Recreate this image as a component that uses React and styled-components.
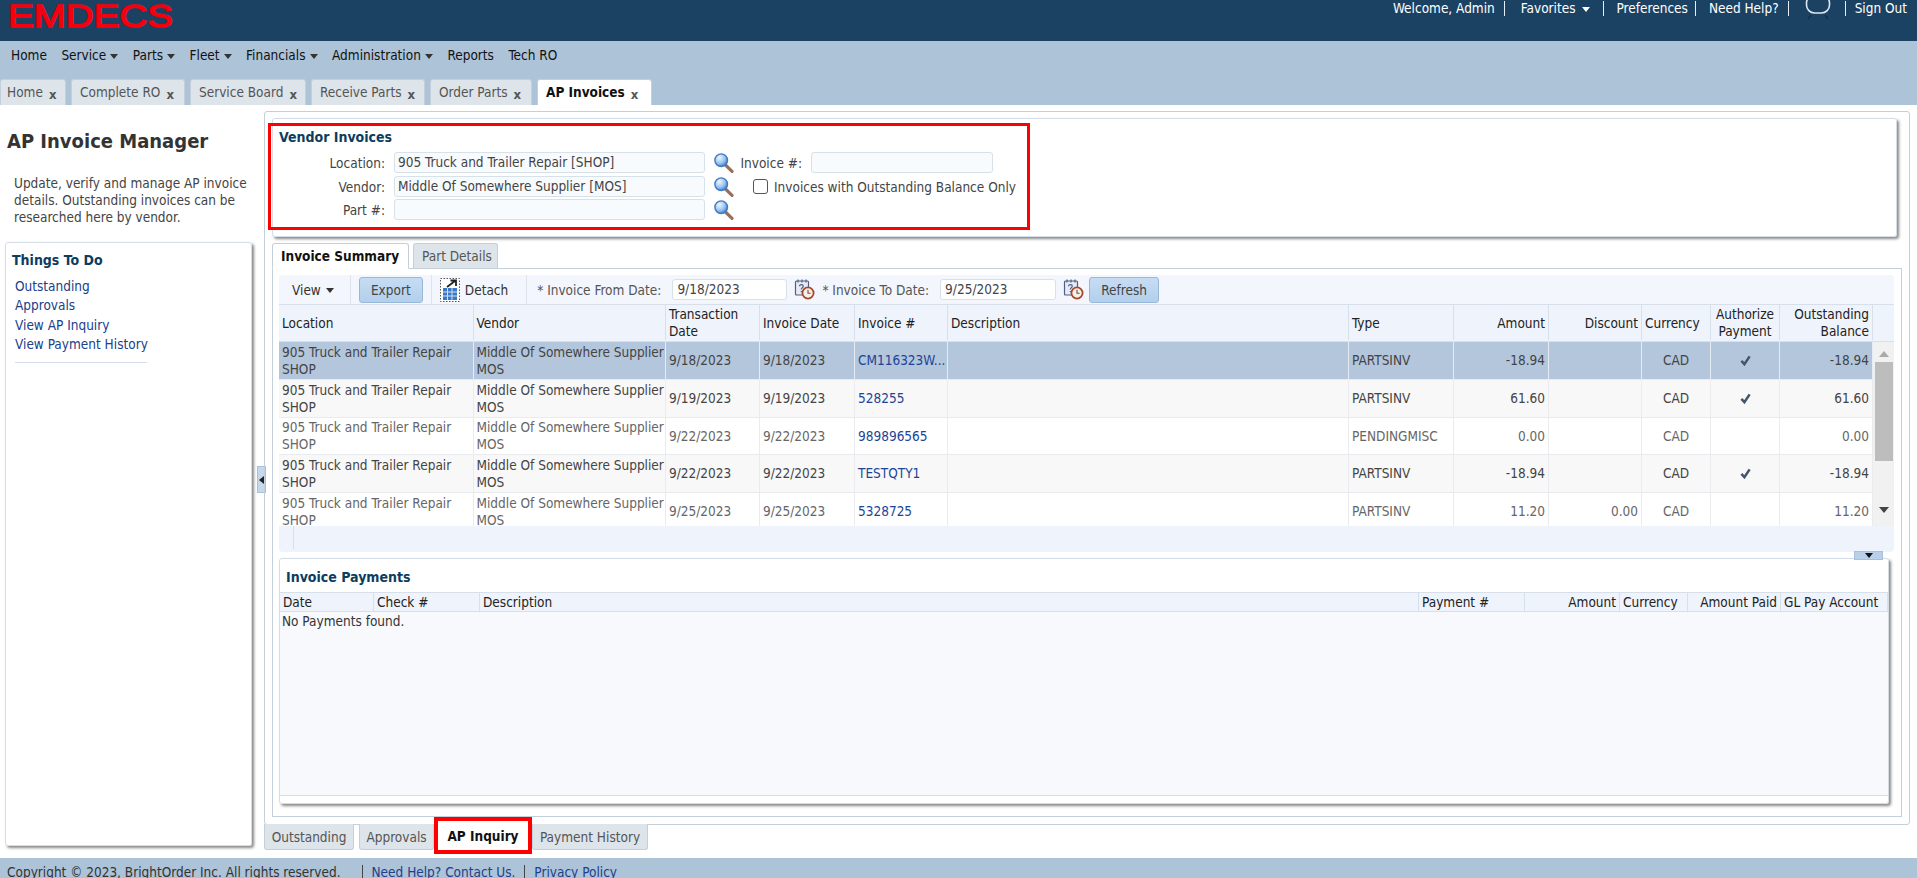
import styled, { createGlobalStyle } from "styled-components";

const GlobalStyle = createGlobalStyle`
  html, body {
    margin: 0;
    padding: 0;
    height: 100%;
    overflow: hidden;
    background: #fff;
  }
  body {
    font-family: "DejaVu Sans Condensed", "DejaVu Sans", sans-serif;
    font-stretch: condensed;
    font-size: 13.5px;
    color: #444;
  }
  * {
    box-sizing: border-box;
  }
`;

const Page = styled.div`
  width: 1917px;
  height: 878px;
  display: flex;
  flex-direction: column;
  overflow: hidden;
`;

const TopBar = styled.header`
  height: 41px;
  flex: none;
  background: #1c4263;
  display: flex;
  justify-content: space-between;
  padding: 0 10px 0 7px;
  color: #fff;
`;

const Logo = styled.svg`
  width: 170px;
  height: 30px;
  margin-top: 1px;
`;

const UserLinks = styled.div`
  display: flex;
  align-items: flex-start;
  height: 17px;
  line-height: 17px;
`;

const UserLink = styled.span`
  margin-left: ${(p) => p.$left || 0}px;
  display: inline-flex;
  align-items: center;
  gap: 6px;
`;

const Pipe = styled.span`
  margin-left: ${(p) => p.$left || 9}px;
  width: 1px;
  height: 15px;
  margin-top: 1px;
  background: #e8eef4;
`;

const ChatIcon = styled.svg`
  width: 26px;
  height: 20px;
  margin-left: 16px;
`;

const NavBlock = styled.div`
  height: 64px;
  flex: none;
  background: #adc3d8;
  display: flex;
  flex-direction: column;
  justify-content: space-between;
`;

const Menu = styled.nav`
  display: flex;
  align-items: center;
  height: 28px;
  padding-left: 11px;
  gap: 14.5px;
  color: #111;
`;

const MenuItem = styled.span`
  display: inline-flex;
  align-items: center;
  gap: 4px;
`;

const Caret = styled.i`
  display: inline-block;
  width: 0;
  height: 0;
  margin-top: 2px;
  border-left: 4.5px solid transparent;
  border-right: 4.5px solid transparent;
  border-top: 5px solid ${(p) => p.$color || "#333"};
`;

const PageTabs = styled.div`
  display: flex;
  gap: 5px;
  height: 26px;
  align-items: stretch;
`;

const PageTab = styled.div`
  display: flex;
  align-items: center;
  gap: 6px;
  width: ${(p) => p.$width}px;
  padding: 0 0 2px ${(p) => (p.$first ? 6 : 8)}px;
  background: ${(p) => (p.$active ? "#fff" : "#dde4ea")};
  color: ${(p) => (p.$active ? "#111" : "#555")};
  font-weight: ${(p) => (p.$active ? 700 : 400)};
  border: 1px solid #c3d0dc;
  border-bottom: none;
  border-radius: 3px 3px 0 0;
  white-space: nowrap;
`;

const CloseMark = styled.span`
  font-weight: 700;
  font-size: 13px;
  line-height: 1;
  margin-top: 6px;
  color: #555;
`;

const Body = styled.div`
  flex: 1;
  display: flex;
  min-height: 0;
  background: #fff;
`;

const Sidebar = styled.aside`
  width: 257px;
  flex: none;
  display: flex;
  flex-direction: column;
  padding: 0 5px 12px 5px;
`;

const PageTitle = styled.h1`
  margin: 23px 0 0 2px;
  font-size: 20px;
  line-height: 26px;
  font-weight: 700;
  color: #333;
`;

const Intro = styled.p`
  margin: 21px 0 0 9px;
  font-size: 13.5px;
  line-height: 17px;
  color: #444;
  white-space: nowrap;
`;

const TodoCard = styled.section`
  flex: 1;
  margin-top: 16px;
  width: 247px;
  border: 1px solid #d5dee8;
  border-radius: 3px;
  box-shadow: 2px 2px 3px #888;
  padding: 8px 0 0 6px;
`;

const TodoTitle = styled.h3`
  margin: 0;
  font-size: 14px;
  line-height: 18px;
  font-weight: 700;
  color: #0c3c5e;
`;

const TodoList = styled.div`
  display: flex;
  flex-direction: column;
  margin: 8px 0 0 3px;
  width: 132px;
  padding-bottom: 7px;
  border-bottom: 1px solid #d5dee8;
`;

const TodoLink = styled.a`
  color: #20408a;
  line-height: 19.4px;
  white-space: nowrap;
`;

const Splitter = styled.div`
  width: 7px;
  flex: none;
  padding-top: 361px;
`;

const SplitHandle = styled.div`
  width: 9px;
  height: 27px;
  background: #c4d8ee;
  border: 1px solid #a8c0da;
  display: flex;
  align-items: center;
  justify-content: center;
`;

const HandleArrow = styled.i`
  width: 0;
  height: 0;
  border-top: 4px solid transparent;
  border-bottom: 4px solid transparent;
  border-right: 5px solid #222;
`;

const Workspace = styled.main`
  width: 646px;
  flex: 1;
  display: flex;
  flex-direction: column;
  padding: 6px 7px 0 0;
  min-width: 0;
`;

const OuterPanel = styled.div`
  height: 714px;
  border: 1px solid #c3cfdb;
  border-radius: 3px;
  padding: 6px 7px 7px 7px;
`;

const VendorCard = styled.section`
  height: 119px;
  margin-right: 5px;
  padding-top: 4px;
  border: 1px solid #d5dee8;
  border-radius: 3px;
  box-shadow: 2px 2px 3px #888;
`;

const RedBox = styled.div`
  position: relative;
  width: 762px;
  height: 107px;
  margin-left: -5px;
  border: 3px solid #f00;
  padding: 0 0 0 8px;
`;

const SectionTitle = styled.h3`
  margin: 0;
  font-size: 14px;
  line-height: 22px;
  font-weight: 700;
  color: #0c3c5e;
`;

const FieldRow = styled.div`
  display: flex;
  align-items: center;
  height: 21px;
  margin-top: ${(p) => p.$top ?? 3}px;
  margin-left: -8px;
`;

const FieldLabel = styled.label`
  width: ${(p) => p.$width}px;
  flex: none;
  text-align: right;
  padding-right: ${(p) => p.$pad ?? 9}px;
  color: #444;
`;

const TextBox = styled.div`
  width: ${(p) => p.$width}px;
  height: 21px;
  flex: none;
  line-height: 19px;
  margin-left: ${(p) => p.$left || 0}px;
  padding-left: 3px;
  background: #f8fbfd;
  border: 1px solid #d7e1ea;
  border-radius: 3px;
  color: #444;
`;

const SearchIcon = styled.svg`
  width: 20px;
  height: 20px;
  margin-left: 9px;
  flex: none;
`;

const CheckBox = styled.i`
  width: 15px;
  height: 15px;
  flex: none;
  margin-left: 19px;
  background: #fff;
  border: 1px solid #555;
  border-radius: 3px;
`;

const CheckLabel = styled.span`
  margin-left: 6px;
  white-space: nowrap;
  color: #444;
`;

const InnerTabs = styled.div`
  display: flex;
  gap: 4px;
  height: 25px;
  margin-top: 6px;
`;

const InnerTab = styled.div`
  display: flex;
  align-items: center;
  width: ${(p) => p.$width}px;
  padding-left: 8px;
  background: ${(p) => (p.$active ? "#fff" : "#dde4ea")};
  color: ${(p) => (p.$active ? "#111" : "#555")};
  font-weight: ${(p) => (p.$active ? 700 : 400)};
  border: 1px solid #c3d0dc;
  border-bottom: ${(p) => (p.$active ? "1px solid #fff" : "none")};
  height: ${(p) => (p.$active ? 26 : 25)}px;
  border-radius: 3px 3px 0 0;
  position: relative;
  z-index: 1;
  white-space: nowrap;
`;

const TabBody = styled.div`
  height: 549px;
  border: 1px solid #c3cfdb;
  padding: 6px 7px 0 6px;
`;

const Toolbar = styled.div`
  display: flex;
  align-items: center;
  height: 29px;
  background: #f3f6fc;
  border-radius: 3px 3px 0 0;
`;

const ToolGroup = styled.div`
  display: flex;
  align-items: center;
  height: 100%;
  padding: 0 ${(p) => p.$right ?? 8}px 0 ${(p) => p.$left ?? 8}px;
  border-right: ${(p) => (p.$last ? "none" : "1px solid #dde4ee")};
`;

const ToolText = styled.span`
  display: inline-flex;
  align-items: center;
  gap: 5px;
  color: #333;
  white-space: nowrap;
`;

const BlueButton = styled.button`
  height: 26px;
  width: ${(p) => p.$width}px;
  padding: 0;
  margin-left: ${(p) => p.$left || 0}px;
  font: inherit;
  font-stretch: condensed;
  color: #444;
  background: linear-gradient(#c6dcf3, #b3cfec);
  border: 1px solid #98b8da;
  border-radius: 3px;
`;

const DateLabel = styled.span`
  margin-left: ${(p) => p.$left || 0}px;
  color: #555;
  white-space: nowrap;
`;

const DateBox = styled(TextBox)`
  margin-left: 11px;
  padding-left: 4px;
  background: #fff;
`;

const CalendarIcon = styled.svg`
  width: 21px;
  height: 22px;
  flex: none;
  margin-left: 7px;
  margin-top: -2px;
`;

const summaryColumns = "194.5px 192.5px 94px 95px 93px 401px 105px 95px 93px 69px 69px 93px";
const paymentColumns = "94px 106px 939px 106px 95px 68px 93px 1fr";

const GridRow = styled.div`
  display: grid;
  grid-template-columns: ${(p) => p.$columns};
  height: ${(p) => p.$height}px;
  width: ${(p) => p.$width || "auto"};
  background: ${(p) => p.$bg || "#fff"};
  border-bottom: 1px solid ${(p) => p.$line || "#e6e9ee"};
  flex: none;
`;

const HeadCell = styled.div`
  display: flex;
  align-items: center;
  justify-content: ${(p) => (p.$end ? "flex-end" : "flex-start")};
  text-align: ${(p) => (p.$end ? "right" : p.$center ? "center" : "left")};
  padding: 1px 3px 0;
  line-height: 17px;
  color: #222;
  background: #eff3fb;
  border-right: 1px solid #d7dfea;
  white-space: ${(p) => (p.$wrap ? "normal" : "nowrap")};
`;

const Cell = styled.div`
  display: flex;
  align-items: center;
  justify-content: ${(p) => (p.$end ? "flex-end" : p.$center ? "center" : "flex-start")};
  padding: 0 3px;
  line-height: 17px;
  color: ${(p) => (p.$dim ? "#666" : "#444")};
  border-right: 1px solid ${(p) => p.$line};
  overflow: hidden;
  white-space: nowrap;
`;

const InvoiceLink = styled.a`
  color: #1d4596;
`;

const Lines = styled.div`
  display: flex;
  flex-direction: column;
`;

const SummaryGrid = styled.div`
  display: flex;
  flex-direction: column;
`;

const HeaderWrap = styled.div`
  display: flex;
  background: #eff3fb;
  border-top: 1px solid #d7dfea;
  border-bottom: 1px solid #d7dfea;
`;

const RowsArea = styled.div`
  display: flex;
  height: 184px;
  overflow: hidden;
`;

const RowsColumn = styled.div`
  width: 1594px;
  flex: none;
  display: flex;
  flex-direction: column;
`;

const ScrollTrack = styled.div`
  flex: 1;
  background: #f1f1f1;
  display: flex;
  flex-direction: column;
  align-items: center;
  padding-top: 9px;
`;

const ScrollThumb = styled.div`
  width: 18px;
  height: 99px;
  margin-top: 5px;
  background: #bdbdbd;
`;

const ScrollArrow = styled.i`
  width: 0;
  height: 0;
  border-left: 5px solid transparent;
  border-right: 5px solid transparent;
  ${(p) => (p.$down ? "border-top: 6px solid #444; margin-top: 46px;" : "border-bottom: 6px solid #aaa;")}
`;

const GridFooter = styled.div`
  height: 26px;
  background: #eff3fb;
  border-radius: 0 0 4px 4px;
  padding-left: 14px;
`;

const FooterTick = styled.div`
  width: 1px;
  height: 23px;
  background: #d7dfea;
`;

const PaymentsCard = styled.section`
  position: relative;
  margin-top: 6px;
  height: 246px;
  width: 1610px;
  border: 1px solid #d5dee8;
  border-radius: 3px;
  box-shadow: 2px 2px 3px #888;
  display: flex;
  flex-direction: column;
`;

const PaymentsTitle = styled(SectionTitle)`
  height: 33px;
  padding: 7px 0 0 6px;
`;

const CollapseTab = styled.div`
  position: absolute;
  top: -8px;
  right: 5px;
  width: 29px;
  height: 9px;
  background: #b9d0ea;
  border: 1px solid #a8c0da;
  display: flex;
  align-items: center;
  justify-content: center;
`;

const CollapseArrow = styled.i`
  width: 0;
  height: 0;
  border-left: 4.5px solid transparent;
  border-right: 4.5px solid transparent;
  border-top: 5px solid #111;
`;

const PaymentsBody = styled.div`
  flex: 1;
  margin: 0 0 7px 0;
  padding: 1px 2px;
  line-height: 17px;
  color: #333;
  background: #f7f9fd;
  border-bottom: 1px solid #d5dee8;
`;

const BottomTabs = styled.div`
  display: flex;
  gap: 5px;
  align-items: flex-start;
  height: 26px;
  margin-top: -1px;
`;

const BottomTab = styled.div`
  display: flex;
  align-items: center;
  justify-content: center;
  width: ${(p) => p.$width}px;
  height: 26px;
  padding-top: 1px;
  color: #555;
  background: #dde4ea;
  border: 1px solid #c3d0dc;
  border-top: none;
  border-radius: 0 0 3px 3px;
  white-space: nowrap;
`;

const ActiveBottomTab = styled.div`
  position: relative;
  display: flex;
  align-items: center;
  justify-content: center;
  width: 98px;
  height: 37px;
  margin: -7px -5px 0 -5px;
  font-weight: 700;
  color: #111;
  background: #fff;
  border: 4px solid #f00;
  white-space: nowrap;
`;

const Footer = styled.footer`
  height: 20px;
  flex: none;
  display: flex;
  align-items: flex-start;
  padding: 6px 0 0 7px;
  line-height: 17px;
  background: #adc3d8;
  overflow: hidden;
  color: #333;
`;

const FooterLink = styled.a`
  color: #20408a;
`;

const FooterPipe = styled.span`
  width: 1px;
  height: 14px;
  margin: 1px 9px 0 ${(p) => p.$left || 9}px;
  background: #444;
`;

function Magnifier() {
  return (
    <SearchIcon viewBox="0 0 20 20">
      <defs>
        <radialGradient id="glass" cx="35%" cy="30%" r="75%">
          <stop offset="0%" stopColor="#eef6fe" />
          <stop offset="60%" stopColor="#9cc3ee" />
          <stop offset="100%" stopColor="#3a78c8" />
        </radialGradient>
      </defs>
      <path d="M11 11.5 L18 18.3" stroke="#96705c" strokeWidth="3.2" strokeLinecap="round" />
      <circle cx="7.2" cy="7.2" r="6.3" fill="url(#glass)" stroke="#3f7cc8" strokeWidth="1.4" />
    </SearchIcon>
  );
}

function Calendar() {
  return (
    <CalendarIcon viewBox="0 0 21 22">
      <rect x="1.5" y="3" width="13" height="14" rx="1" fill="#e6ebf5" stroke="#4f5f88" strokeWidth="1.2" />
      <path d="M4 1.5v3M8 1.5v3M12 1.5v3" stroke="#4f5f88" strokeWidth="1.2" />
      <path d="M5.5 8.2c0-2.2 3.8-2.2 3.8 0 0 1.6-2 1.6-2 3.2M7.3 13v1" fill="none" stroke="#4f5f88" strokeWidth="1.2" />
      <circle cx="14" cy="15" r="5.6" fill="#f6f1e8" stroke="#a8472f" strokeWidth="1.8" />
      <path d="M14 11.8V15.2h2.6" fill="none" stroke="#7a4a30" strokeWidth="1.1" />
    </CalendarIcon>
  );
}

function DetachIcon() {
  return (
    <svg width="20" height="24" viewBox="0 0 20 24">
      <rect x="0.5" y="0.5" width="19" height="23" fill="#fff" stroke="#555" strokeWidth="1" strokeDasharray="1.5 1.5" />
      <rect x="3" y="10" width="14" height="12" fill="#3a78c8" />
      <path d="M3 14h14M3 18h14M7.5 10v12M12 10v12" stroke="#cfe0f5" strokeWidth="1" />
      <path d="M7 9 L15 3M10.5 2.5H16V8" fill="none" stroke="#222" strokeWidth="1.8" />
    </svg>
  );
}

function Tick() {
  return (
    <svg width="11" height="11" viewBox="0 0 12 12">
      <path d="M1.5 6.5 L4.8 10 L10.5 1.5" fill="none" stroke="#44556f" strokeWidth="2.8" />
    </svg>
  );
}

const pageTabs = [
  { label: "Home", width: 66, first: true },
  { label: "Complete RO", width: 114 },
  { label: "Service Board", width: 116 },
  { label: "Receive Parts", width: 114 },
  { label: "Order Parts", width: 102 },
  { label: "AP Invoices", width: 115, active: true },
];

const invoices = [
  { date: "9/18/2023", no: "CM116323W...", type: "PARTSINV", amount: "-18.94", auth: true, selected: true, height: 38 },
  { date: "9/19/2023", no: "528255", type: "PARTSINV", amount: "61.60", auth: true, alt: true, height: 38 },
  { date: "9/22/2023", no: "989896565", type: "PENDINGMISC", amount: "0.00", dim: true, height: 37 },
  { date: "9/22/2023", no: "TESTQTY1", type: "PARTSINV", amount: "-18.94", auth: true, alt: true, height: 38 },
  { date: "9/25/2023", no: "5328725", type: "PARTSINV", amount: "11.20", discount: "0.00", dim: true, height: 38 },
];

function InvoiceRow({ row }) {
  const bg = row.selected ? "#b3c6dc" : row.alt ? "#f8f8f8" : "#fff";
  const line = row.selected ? "#e6ecf3" : "#e9ebee";
  const cell = { $dim: row.dim, $line: line };
  return (
    <GridRow $columns={summaryColumns} $height={row.height} $bg={bg} $line="#e9ebee">
      <Cell {...cell}>
        <Lines>
          <span>905 Truck and Trailer Repair</span>
          <span>SHOP</span>
        </Lines>
      </Cell>
      <Cell {...cell}>
        <Lines>
          <span>Middle Of Somewhere Supplier</span>
          <span>MOS</span>
        </Lines>
      </Cell>
      <Cell {...cell}>{row.date}</Cell>
      <Cell {...cell}>{row.date}</Cell>
      <Cell {...cell}>
        <InvoiceLink>{row.no}</InvoiceLink>
      </Cell>
      <Cell {...cell} />
      <Cell {...cell}>{row.type}</Cell>
      <Cell {...cell} $end>{row.amount}</Cell>
      <Cell {...cell} $end>{row.discount}</Cell>
      <Cell {...cell} $center>CAD</Cell>
      <Cell {...cell} $center>{row.auth && <Tick />}</Cell>
      <Cell {...cell} $end>{row.amount}</Cell>
    </GridRow>
  );
}

function App() {
  return (
    <Page>
      <GlobalStyle />
      <TopBar>
        <Logo viewBox="0 0 170 30">
          <text
            x="1"
            y="25.5"
            textLength="165"
            lengthAdjust="spacingAndGlyphs"
            fontFamily="Liberation Sans"
            fontSize="32"
            fill="#f4000e"
            stroke="#f4000e"
            strokeWidth="1.4"
          >
            EMDECS
          </text>
        </Logo>
        <UserLinks>
          <UserLink>Welcome, Admin</UserLink>
          <Pipe />
          <UserLink $left={16}>
            Favorites <Caret $color="#fff" />
          </UserLink>
          <Pipe $left={13} />
          <UserLink $left={13}>Preferences</UserLink>
          <Pipe $left={7} />
          <UserLink $left={13}>Need Help?</UserLink>
          <Pipe $left={9} />
          <ChatIcon viewBox="0 0 26 20">
            <rect x="1.5" y="-5" width="23" height="18" rx="8" fill="none" stroke="#dfe8f0" strokeWidth="1.6" />
            <path d="M3 19l3-4M23 19l-3-4" stroke="#123049" strokeWidth="1.4" />
          </ChatIcon>
          <Pipe $left={14} />
          <UserLink $left={9}>Sign Out</UserLink>
        </UserLinks>
      </TopBar>

      <NavBlock>
        <Menu>
          <MenuItem>Home</MenuItem>
          <MenuItem>Service <Caret /></MenuItem>
          <MenuItem>Parts <Caret /></MenuItem>
          <MenuItem>Fleet <Caret /></MenuItem>
          <MenuItem>Financials <Caret /></MenuItem>
          <MenuItem>Administration <Caret /></MenuItem>
          <MenuItem>Reports</MenuItem>
          <MenuItem>Tech RO</MenuItem>
        </Menu>
        <PageTabs>
          {pageTabs.map((tab) => (
            <PageTab key={tab.label} $width={tab.width} $active={tab.active} $first={tab.first}>
              {tab.label}
              <CloseMark>x</CloseMark>
            </PageTab>
          ))}
        </PageTabs>
      </NavBlock>

      <Body>
        <Sidebar>
          <PageTitle>AP Invoice Manager</PageTitle>
          <Intro>
            Update, verify and manage AP invoice
            <br />
            details. Outstanding invoices can be
            <br />
            researched here by vendor.
          </Intro>
          <TodoCard>
            <TodoTitle>Things To Do</TodoTitle>
            <TodoList>
              <TodoLink>Outstanding</TodoLink>
              <TodoLink>Approvals</TodoLink>
              <TodoLink>View AP Inquiry</TodoLink>
              <TodoLink>View Payment History</TodoLink>
            </TodoList>
          </TodoCard>
        </Sidebar>
        <Splitter>
          <SplitHandle>
            <HandleArrow />
          </SplitHandle>
        </Splitter>

        <Workspace>
          <OuterPanel>
            <VendorCard>
              <RedBox>
                <SectionTitle>Vendor Invoices</SectionTitle>
                <FieldRow $top={4}>
                  <FieldLabel $width={123}>Location:</FieldLabel>
                  <TextBox $width={311}>905 Truck and Trailer Repair [SHOP]</TextBox>
                  <Magnifier />
                  <FieldLabel $width={68} $pad={0}>Invoice #:</FieldLabel>
                  <TextBox $width={182} $left={9} />
                </FieldRow>
                <FieldRow>
                  <FieldLabel $width={123}>Vendor:</FieldLabel>
                  <TextBox $width={311}>Middle Of Somewhere Supplier [MOS]</TextBox>
                  <Magnifier />
                  <CheckBox />
                  <CheckLabel>Invoices with Outstanding Balance Only</CheckLabel>
                </FieldRow>
                <FieldRow $top={2}>
                  <FieldLabel $width={123}>Part #:</FieldLabel>
                  <TextBox $width={311} />
                  <Magnifier />
                </FieldRow>
              </RedBox>
            </VendorCard>

            <InnerTabs>
              <InnerTab $active $width={137}>Invoice Summary</InnerTab>
              <InnerTab $width={85}>Part Details</InnerTab>
            </InnerTabs>
            <TabBody>
              <Toolbar>
                <ToolGroup $left={13} $right={16}>
                  <ToolText>View <Caret /></ToolText>
                </ToolGroup>
                <ToolGroup $left={8} $right={8}>
                  <BlueButton $width={64}>Export</BlueButton>
                </ToolGroup>
                <ToolGroup $left={8} $right={18}>
                  <ToolText><DetachIcon />Detach</ToolText>
                </ToolGroup>
                <ToolGroup $left={10} $right={0} $last>
                  <DateLabel>* Invoice From Date:</DateLabel>
                  <DateBox $width={115}>9/18/2023</DateBox>
                  <Calendar />
                  <DateLabel $left={7}>* Invoice To Date:</DateLabel>
                  <DateBox $width={116}>9/25/2023</DateBox>
                  <Calendar />
                  <BlueButton $width={70} $left={5}>Refresh</BlueButton>
                </ToolGroup>
              </Toolbar>

              <SummaryGrid>
                <HeaderWrap>
                  <GridRow $columns={summaryColumns} $height={36} $width="1594px" $bg="#eff3fb" $line="transparent">
                    <HeadCell>Location</HeadCell>
                    <HeadCell>Vendor</HeadCell>
                    <HeadCell $wrap>Transaction Date</HeadCell>
                    <HeadCell>Invoice Date</HeadCell>
                    <HeadCell>Invoice #</HeadCell>
                    <HeadCell>Description</HeadCell>
                    <HeadCell>Type</HeadCell>
                    <HeadCell $end>Amount</HeadCell>
                    <HeadCell $end>Discount</HeadCell>
                    <HeadCell>Currency</HeadCell>
                    <HeadCell $wrap $center>Authorize Payment</HeadCell>
                    <HeadCell $wrap $end>Outstanding Balance</HeadCell>
                  </GridRow>
                </HeaderWrap>
                <RowsArea>
                  <RowsColumn>
                    {invoices.map((row, i) => (
                      <InvoiceRow key={i} row={row} />
                    ))}
                  </RowsColumn>
                  <ScrollTrack>
                    <ScrollArrow />
                    <ScrollThumb />
                    <ScrollArrow $down />
                  </ScrollTrack>
                </RowsArea>
                <GridFooter>
                  <FooterTick />
                </GridFooter>
              </SummaryGrid>

              <PaymentsCard>
                <CollapseTab>
                  <CollapseArrow />
                </CollapseTab>
                <PaymentsTitle>Invoice Payments</PaymentsTitle>
                <HeaderWrap>
                  <GridRow $columns={paymentColumns} $height={18} $width="100%" $bg="#eff3fb" $line="transparent">
                    <HeadCell>Date</HeadCell>
                    <HeadCell>Check #</HeadCell>
                    <HeadCell>Description</HeadCell>
                    <HeadCell>Payment #</HeadCell>
                    <HeadCell $end>Amount</HeadCell>
                    <HeadCell>Currency</HeadCell>
                    <HeadCell $end>Amount Paid</HeadCell>
                    <HeadCell>GL Pay Account</HeadCell>
                  </GridRow>
                </HeaderWrap>
                <PaymentsBody>No Payments found.</PaymentsBody>
              </PaymentsCard>
            </TabBody>
          </OuterPanel>

          <BottomTabs>
            <BottomTab $width={90}>Outstanding</BottomTab>
            <BottomTab $width={75}>Approvals</BottomTab>
            <ActiveBottomTab>AP Inquiry</ActiveBottomTab>
            <BottomTab $width={116}>Payment History</BottomTab>
          </BottomTabs>
        </Workspace>
      </Body>

      <Footer>
        Copyright © 2023, BrightOrder Inc. All rights reserved.
        <FooterPipe $left={21} />
        <FooterLink>Need Help? Contact Us.</FooterLink>
        <FooterPipe />
        <FooterLink>Privacy Policy</FooterLink>
      </Footer>
    </Page>
  );
}

export default App;
